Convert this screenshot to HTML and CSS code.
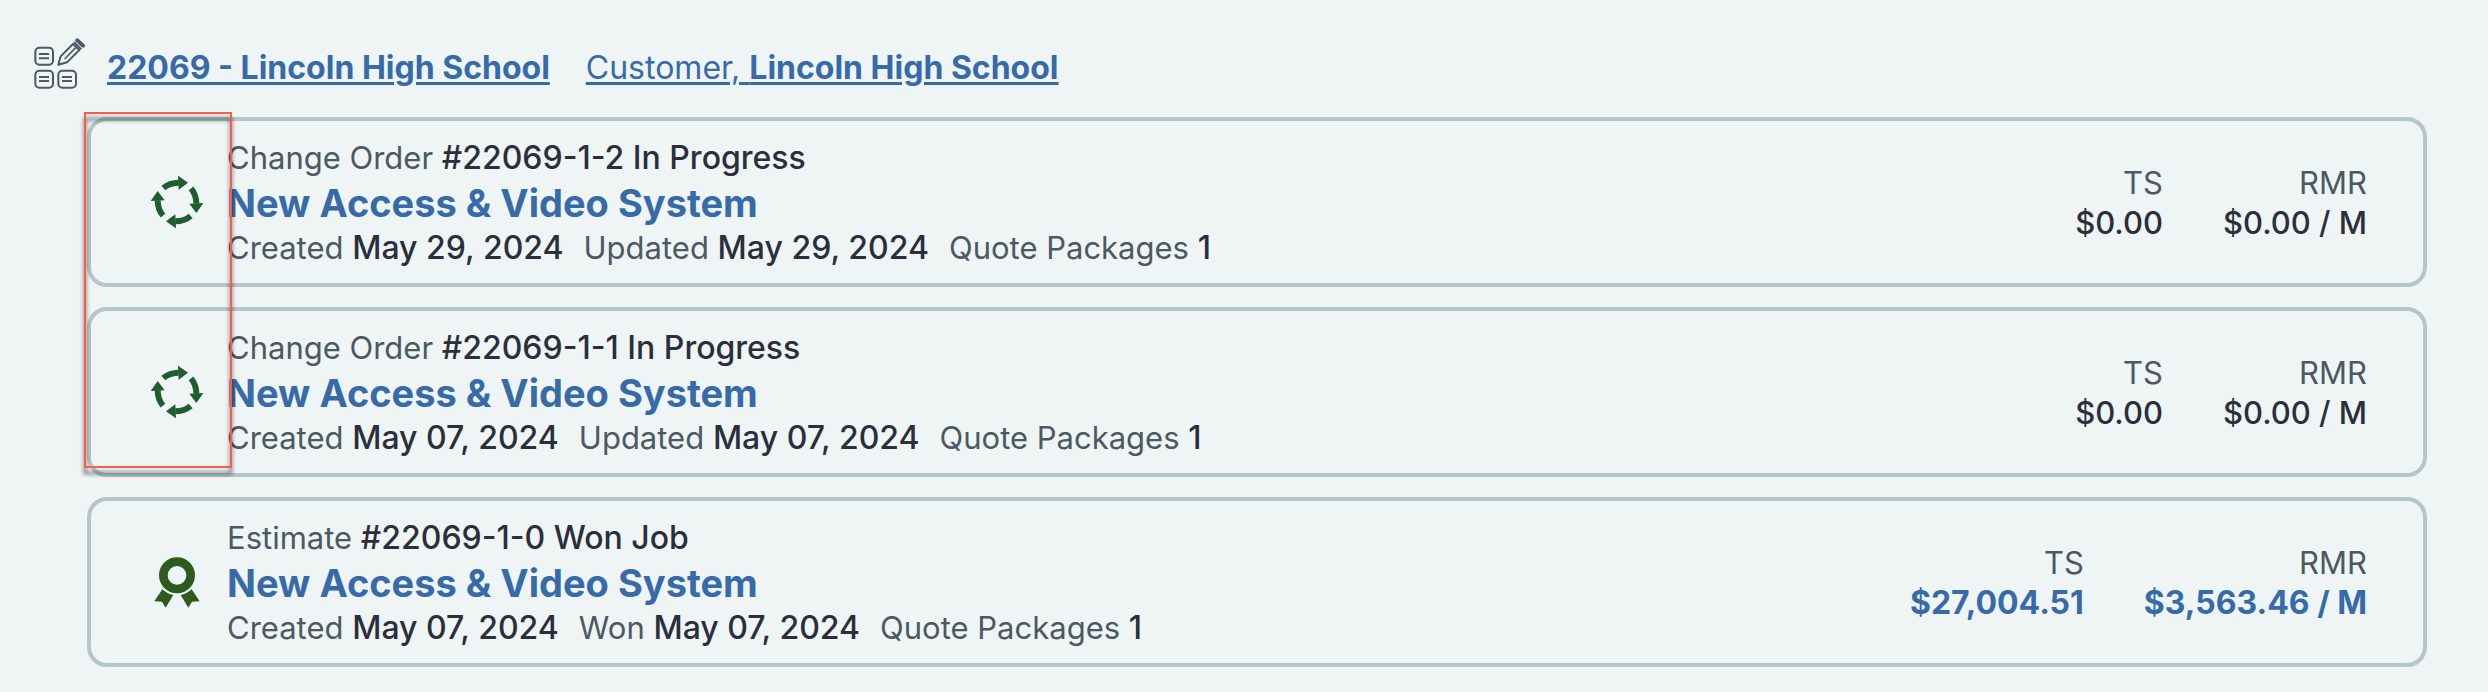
FILE: index.html
```html
<!DOCTYPE html>
<html lang="en">
<head>
  <meta charset="UTF-8">
  <meta name="viewport" content="width=device-width, initial-scale=1.0">
  <title>22069 - Lincoln High School</title>
  <link rel="stylesheet" href="styles.css">
</head>
<body>
  <!-- Shared icons -->
  <svg class="icon-defs" aria-hidden="true">
    <symbol id="icon-cycle" viewBox="-78 -78 156 156">
      <g id="cycle-arrow">
        <path d="M-41 -42Q-22 -58 5 -58" fill="none" stroke="currentColor" stroke-width="18"/>
        <path d="M3 -79L33 -58L5 -37Z" fill="currentColor"/>
      </g>
      <use href="#cycle-arrow" transform="rotate(90)"/>
      <use href="#cycle-arrow" transform="rotate(180)"/>
      <use href="#cycle-arrow" transform="rotate(270)"/>
    </symbol>
    <symbol id="icon-award" viewBox="63 51 156 156">
      <circle cx="141" cy="109" r="41" fill="none" stroke="currentColor" stroke-width="26"/>
      <path d="M97 151Q112 165 130 168L107 206L96 188L73 187Z" fill="currentColor"/>
      <path d="M185 151Q170 165 152 168L175 206L186 188L209 187Z" fill="currentColor"/>
    </symbol>
  </svg>

  <!-- Project header -->
  <header class="project-header">
    <svg class="project-icon" viewBox="27 21 156 156" fill="none" stroke="currentColor" stroke-width="6" role="img" aria-label="Project">
      <rect x="34" y="53" width="53" height="51" rx="12"/>
      <rect x="34" y="122" width="53" height="51" rx="12"/>
      <rect x="103" y="122" width="53" height="51" rx="12"/>
      <path d="M45 72h30M45 85h30M45 141h30M45 153h30M114 141h30M114 153h30"/>
      <path d="M103 104L110 79L147 42L166 60L129 97Z" stroke-linejoin="round"/>
      <path d="M122 87L155 53" stroke-width="5"/>
      <path d="M150 36L172 58"/>
      <path d="M160 31L177 47" stroke-width="12" stroke-linecap="round"/>
    </svg>
    <a href="#" class="project-link"><strong>22069 - Lincoln High School</strong></a>
    <a href="#" class="project-link">Customer, <strong>Lincoln High School</strong></a>
  </header>

  <!-- Orders and estimates -->
  <main class="order-list">
    <article class="order">
      <svg class="order-icon" role="img" aria-label="In Progress"><use href="#icon-cycle"/></svg>
      <div class="order-info">
        <p>Change Order <b>#22069-1-2 In Progress</b></p>
        <h2><a href="#">New Access &amp; Video System</a></h2>
        <p class="order-meta">
          <span>Created <b>May 29, 2024</b></span>
          <span>Updated <b>May 29, 2024</b></span>
          <span>Quote Packages <b>1</b></span>
        </p>
      </div>
      <dl class="totals">
        <div><dt>TS</dt><dd>$0.00</dd></div>
        <div><dt>RMR</dt><dd>$0.00 / M</dd></div>
      </dl>
    </article>

    <article class="order">
      <svg class="order-icon" role="img" aria-label="In Progress"><use href="#icon-cycle"/></svg>
      <div class="order-info">
        <p>Change Order <b>#22069-1-1 In Progress</b></p>
        <h2><a href="#">New Access &amp; Video System</a></h2>
        <p class="order-meta">
          <span>Created <b>May 07, 2024</b></span>
          <span>Updated <b>May 07, 2024</b></span>
          <span>Quote Packages <b>1</b></span>
        </p>
      </div>
      <dl class="totals">
        <div><dt>TS</dt><dd>$0.00</dd></div>
        <div><dt>RMR</dt><dd>$0.00 / M</dd></div>
      </dl>
    </article>

    <article class="order">
      <svg class="order-icon won" role="img" aria-label="Won Job"><use href="#icon-award"/></svg>
      <div class="order-info">
        <p>Estimate <b>#22069-1-0 Won Job</b></p>
        <h2><a href="#">New Access &amp; Video System</a></h2>
        <p class="order-meta">
          <span>Created <b>May 07, 2024</b></span>
          <span>Won <b>May 07, 2024</b></span>
          <span>Quote Packages <b>1</b></span>
        </p>
      </div>
      <dl class="totals won-totals">
        <div><dt>TS</dt><dd>$27,004.51</dd></div>
        <div><dt>RMR</dt><dd>$3,563.46 / M</dd></div>
      </dl>
    </article>

    <!-- Highlight over the icons of the open change orders -->
    <div class="highlight"></div>
  </main>
</body>
</html>
```

FILE: styles.css
```css
* {
  box-sizing: border-box;
}
body {
  margin: 0;
  background: #eff5f5;
  color: #4b5962;
  font-family: Inter, "Liberation Sans", sans-serif;
  font-size: 31px;
  line-height: 40px;
}
h2, p, dl, dd {
  margin: 0;
}
b {
  color: #2b2e3b;
  font-size: 32px;
  font-weight: 500;
}
a {
  color: #376aa9;
}
.icon-defs {
  display: block;
  width: 0;
  height: 0;
}

/* Header */
.project-header {
  display: flex;
  align-items: center;
  padding: 37px 33px 28px;
}
.project-icon {
  width: 52px;
  height: 52px;
  margin-right: 22px;
}
.project-link {
  margin-right: 36px;
  padding-top: 10px;
  font-size: 32px;
  text-decoration-thickness: 3px;
  text-underline-offset: 3px;
}
.project-link strong {
  font-weight: 700;
}

/* Order cards */
.order-list {
  position: relative;
  display: flex;
  flex-direction: column;
  gap: 20px;
  padding: 0 61px 25px 87px;
}
.order {
  display: flex;
  align-items: center;
  padding: 15px 56px 15px 60px;
  border: 4px solid #b4c6c8;
  border-radius: 20px;
}
.order-icon {
  width: 52px;
  height: 52px;
  margin-right: 24px;
  color: #1f5c2e;
}
.order-icon.won {
  color: #2d5b1e;
}
.order-info {
  flex: 1;
  padding-top: 2px;
}
.order-info h2 {
  font-size: 38px;
  font-weight: 700;
  line-height: 50px;
}
.order-info h2 a {
  text-decoration: none;
}
.order-meta {
  display: flex;
  gap: 20px;
}
.totals {
  display: flex;
  gap: 60px;
  padding-top: 2px;
  text-align: right;
}
.totals dd {
  color: #2b2e3b;
  font-weight: 500;
}
.won-totals dd {
  color: #376aa9;
  font-size: 32px;
  font-weight: 700;
}

.highlight {
  position: absolute;
  top: -5px;
  left: 84px;
  width: 148px;
  height: 356px;
  border: 2px solid #ff5a49;
  filter: drop-shadow(0 6px 2px rgba(0, 0, 0, 0.7));
  pointer-events: none;
}
```
